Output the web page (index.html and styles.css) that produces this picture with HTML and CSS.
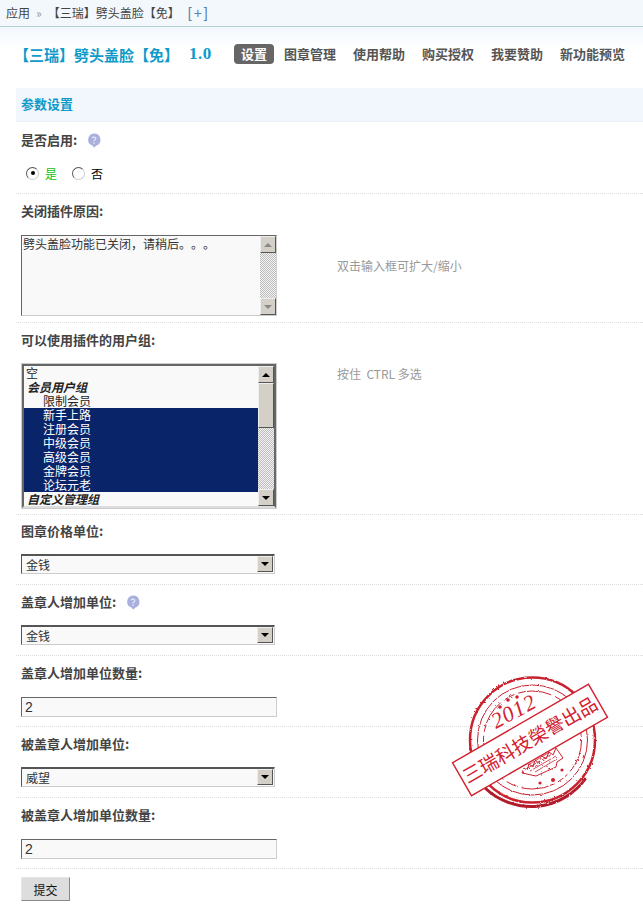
FILE: index.html
```html
<!DOCTYPE html>
<html lang="zh-CN">
<head>
    <meta charset="UTF-8">
    <meta name="viewport" content="width=device-width, initial-scale=1.0">
    <title>【三瑞】劈头盖脸【免】</title>
    <link rel="stylesheet" href="styles.css">
</head>
<body>
    <div class="crumbs">
        <span>应用</span>
        <span class="crumb-sep">»</span>
        <span>【三瑞】劈头盖脸【免】</span>
        <a class="crumb-add" href="#">[+]</a>
    </div>

    <div class="head">
        <h1 class="title">【三瑞】劈头盖脸【免】<span class="version">1.0</span></h1>
        <nav class="tabs">
            <a class="tab active" href="#">设置</a>
            <a class="tab" href="#">图章管理</a>
            <a class="tab" href="#">使用帮助</a>
            <a class="tab" href="#">购买授权</a>
            <a class="tab" href="#">我要赞助</a>
            <a class="tab" href="#">新功能预览</a>
        </nav>
    </div>

    <form class="panel" onsubmit="return false">
        <h2 class="panel-title">参数设置</h2>

        <div class="row row-first">
            <div class="label">是否启用:
                <svg class="help" viewBox="0 0 14 15"><path d="M7 0.5a6.5 6.3 0 0 1 2.2 12.2L7 14.8l-1.2-2A6.5 6.3 0 0 1 7 0.5z" fill="#a9b0de"/><path d="M5.2 5.2C5.4 3.6 8.8 3.6 8.8 5.4C8.8 6.8 7 6.8 7 8.4M7 9.6v1.4" fill="none" stroke="#e4e6f6" stroke-width="1.3"/></svg>
            </div>
            <div class="radios">
                <span class="radio checked"></span><span class="yes">是</span>
                <span class="radio"></span><span class="no">否</span>
            </div>
        </div>

        <div class="row row-area">
            <div class="label label-wide">关闭插件原因:</div>
            <div class="field">
                <div class="area">
                    <textarea class="area-text">劈头盖脸功能已关闭，请稍后。。。</textarea>
                    <div class="scrollbar">
                        <span class="sb-btn off up"></span>
                        <span class="sb-track"></span>
                        <span class="sb-btn off down"></span>
                    </div>
                </div>
                <div class="hint hint-area">双击输入框可扩大/缩小</div>
            </div>
        </div>

        <div class="row row-list">
            <div class="label">可以使用插件的用户组:</div>
            <div class="field">
                <div class="list">
                    <div class="list-items">
                        <div class="item">空</div>
                        <div class="item group">会员用户组</div>
                        <div class="item sub">限制会员</div>
                        <div class="item sub selected">新手上路</div>
                        <div class="item sub selected">注册会员</div>
                        <div class="item sub selected">中级会员</div>
                        <div class="item sub selected">高级会员</div>
                        <div class="item sub selected">金牌会员</div>
                        <div class="item sub selected">论坛元老</div>
                        <div class="item group">自定义管理组</div>
                    </div>
                    <div class="scrollbar">
                        <span class="sb-btn up"></span>
                        <span class="sb-thumb"></span>
                        <span class="sb-track"></span>
                        <span class="sb-btn down"></span>
                    </div>
                </div>
                <div class="hint">按住&nbsp;&nbsp;CTRL 多选</div>
            </div>
        </div>

        <div class="row">
            <div class="label label-tight">图章价格单位:</div>
            <div class="pick"><select class="pick-box"><option>金钱</option></select><span class="sb-btn down"></span></div>
        </div>

        <div class="row">
            <div class="label">盖章人增加单位:
                <svg class="help" viewBox="0 0 14 15"><path d="M7 0.5a6.5 6.3 0 0 1 2.2 12.2L7 14.8l-1.2-2A6.5 6.3 0 0 1 7 0.5z" fill="#a9b0de"/><path d="M5.2 5.2C5.4 3.6 8.8 3.6 8.8 5.4C8.8 6.8 7 6.8 7 8.4M7 9.6v1.4" fill="none" stroke="#e4e6f6" stroke-width="1.3"/></svg>
            </div>
            <div class="pick"><select class="pick-box"><option>金钱</option></select><span class="sb-btn down"></span></div>
        </div>

        <div class="row row-input">
            <div class="label label-wide">盖章人增加单位数量:</div>
            <input class="text-input" type="text" value="2">
        </div>

        <div class="row">
            <div class="label">被盖章人增加单位:</div>
            <div class="pick"><select class="pick-box"><option>威望</option></select><span class="sb-btn down"></span></div>
        </div>

        <div class="row row-input">
            <div class="label label-wide">被盖章人增加单位数量:</div>
            <input class="text-input" type="text" value="2">
        </div>

        <button class="submit" type="submit">提交</button>

        <!-- stamp lies over the rows -->
        <svg class="stamp" viewBox="0 0 180 150">
            <defs>
                <filter id="rough" x="-5%" y="-5%" width="110%" height="110%">
                    <feTurbulence type="fractalNoise" baseFrequency="0.35" numOctaves="2" seed="4"/>
                    <feDisplacementMap in="SourceGraphic" scale="2.5"/>
                </filter>
            </defs>
            <g fill="none" stroke="#c9202e" filter="url(#rough)">
                <circle cx="92.5" cy="75" r="62.5" stroke-width="2.5"/>
                <path d="M45 123A67 67 0 0 0 146 113" stroke="#b01c2a" stroke-width="3"/>
                <circle cx="92.5" cy="75" r="55" stroke-width="1"/>
                <circle cx="92.5" cy="75" r="49" stroke-width="1" stroke-dasharray="34 4 12 4"/>
                <path d="M82 108l2-5 3 2 2-6 4 3 2-7 4 3 3-7 4 3 3-7 4 3 3-7 7 10-6 4-1 5-20 9z" fill="#fff" stroke-width="1"/>
                <path d="M86 104l26-15M90 106l26-15M95 107l22-13M88 100l22-13" stroke-width="0.8"/>
            </g>
            <g fill="#d3202f">
                <circle cx="60" cy="42" r="1.8"/>
                <circle cx="68" cy="35" r="1.8"/>
                <circle cx="77" cy="32" r="1.8"/>
                <circle cx="100" cy="118" r="1.6"/>
                <circle cx="113" cy="115" r="2"/>
                <circle cx="122" cy="105" r="1.6"/>
            </g>
            <text class="stamp-year" x="56" y="64" transform="rotate(-28 56 64)">2012</text>
            <g transform="rotate(-30 90 75)">
                <rect x="11.5" y="56" width="157" height="38" fill="#fff" stroke="#d3202f" stroke-width="1.4"/>
                <text class="stamp-text" x="90" y="82">三瑞科技榮譽出品</text>
            </g>
        </svg>
    </form>
</body>
</html>
```

FILE: styles.css
```css
html, body {
    margin: 0;
    padding: 0;
}
body {
    background-color: #fff;
    color: #444;
    font-family: "Noto Sans CJK SC", "Liberation Sans", sans-serif;
    font-size: 12px;
    overflow: hidden;
}

/* breadcrumb */
.crumbs {
    display: flex;
    align-items: center;
    gap: 6px;
    height: 26px;
    padding-left: 6px;
    background-color: #f2f8fc;
    border-bottom: 1px solid #b8cdd6;
    color: #444;
    line-height: 22px;
}
.crumb-sep {
    color: #999;
}
.crumb-add {
    margin-left: 2px;
    color: #5a7fb0;
    font-family: "Liberation Sans", sans-serif;
    font-size: 14px;
    letter-spacing: 2px;
    text-decoration: none;
}

/* title + tabs */
.head {
    display: flex;
    align-items: center;
    height: 61px;
    padding: 0 0 7px 14px;
    box-sizing: border-box;
    background: linear-gradient(#f1f8fd, #fff 22px);
}
.title {
    display: flex;
    align-items: center;
    gap: 10px;
    width: 220px;
    margin: 0;
    color: #0f9ac9;
    font-size: 15px;
    font-weight: bold;
}
.version {
    font-family: "Liberation Serif", serif;
    font-size: 17px;
    letter-spacing: 0.5px;
}
.tabs {
    display: flex;
    gap: 3px;
}
.tab {
    padding: 0 7px;
    border-radius: 4px;
    color: #555;
    font-size: 13px;
    font-weight: bold;
    line-height: 20px;
    text-decoration: none;
}
.tab.active {
    background-color: #666;
    color: #fff;
}

/* form */
.panel {
    position: relative;
    margin-left: 16px;
}
.panel-title {
    height: 34px;
    margin: 0;
    padding-left: 5px;
    background-color: #f1f7fd;
    border-bottom: 1px solid #eef3f7;
    box-sizing: border-box;
    color: #0f9ac9;
    font-size: 13px;
    font-weight: bold;
    line-height: 31px;
}
.row {
    padding: 8px 0 10px 5px;
    border-bottom: 1px dotted #ddd;
}
.row-first {
    padding-top: 9px;
}
.row-first .label {
    margin-bottom: 14px;
}
.row-area {
    padding-bottom: 6px;
}
.row-list {
    padding-bottom: 5px;
}
.row-input {
    padding-bottom: 9px;
}
.label {
    display: flex;
    align-items: center;
    gap: 3px;
    height: 18px;
    margin-bottom: 14px;
    color: #444;
    font-size: 13px;
    font-weight: bold;
    line-height: 18px;
}
.label-wide {
    margin-bottom: 15px;
}
.label-tight {
    margin-top: -1px;
    margin-bottom: 14px;
}
.help {
    width: 14px;
    height: 15px;
    margin-left: 7px;
}

/* radios */
.radios {
    display: flex;
    align-items: center;
    height: 20px;
    padding-left: 5px;
    color: #000;
}
.radio {
    position: relative;
    width: 11px;
    height: 11px;
    border-radius: 50%;
    border: 1px solid;
    border-color: #555 #ccc #ccc #555;
    background-color: #fff;
}
.radio.checked::after {
    content: "";
    position: absolute;
    left: 3.5px;
    top: 3.5px;
    width: 4px;
    height: 4px;
    border-radius: 50%;
    background-color: #000;
}
.yes {
    width: 27px;
    margin-left: 6px;
    color: #12c012;
}
.no {
    margin-left: 6px;
}

/* textarea + listbox */
.field {
    display: flex;
}
.hint {
    margin: 3px 0 0 60px;
    color: #999;
    line-height: 16px;
}
.hint-area {
    margin-top: 23px;
}
.area {
    display: flex;
    width: 254px;
    height: 79px;
    background-color: #f9f9f9;
    border: 1px solid;
    border-color: #666 #ccc #ccc #666;
}
.area-text {
    flex: 1;
    min-width: 0;
    padding: 1px 0 0 1px;
    background: transparent;
    border: none;
    outline: none;
    resize: none;
    overflow: hidden;
    color: #333;
    font-family: "Noto Sans CJK TC", sans-serif;
    font-size: 12px;
    line-height: 14px;
    text-spacing-trim: space-all;
}
.list {
    display: flex;
    width: 250px;
    height: 140px;
    background-color: #f9f9f9;
    border: 3px solid;
    border-color: #666 #666 #ddd #666;
    outline: 1px solid #ccc;
    outline-offset: -1px;
}
.list-items {
    flex: 1;
    min-width: 0;
    color: #222;
}
.item {
    height: 14px;
    padding-left: 2px;
    font-family: "Liberation Sans", "Noto Sans CJK SC", sans-serif;
    line-height: 16px;
    white-space: nowrap;
}
.item.group {
    padding-left: 3px;
    color: #222;
    font-style: italic;
    font-weight: bold;
}
.item.sub {
    padding-left: 19px;
}
.item.selected {
    background-color: #0a246a;
    color: #fff;
}

/* old style scrollbar */
.scrollbar {
    display: flex;
    flex-direction: column;
    width: 16px;
}
.sb-track {
    flex: 1;
    background-color: #eee;
    background-image: repeating-conic-gradient(#bbb 0 25%, #f4f4f4 0 50%);
    background-size: 2px 2px;
}
.sb-thumb {
    height: 45px;
    box-sizing: border-box;
    background-color: #d4d0c8;
    border: 1px solid;
    border-color: #eee #555 #555 #eee;
}
.sb-btn {
    display: flex;
    align-items: center;
    justify-content: center;
    flex-shrink: 0;
    width: 16px;
    height: 17px;
    box-sizing: border-box;
    background-color: #d4d0c8;
    border: 1px solid;
    border-color: #eee #555 #555 #eee;
}
.sb-btn::after {
    content: "";
    border-left: 4px solid transparent;
    border-right: 4px solid transparent;
}
.sb-btn.up::after {
    border-bottom: 4px solid #000;
}
.sb-btn.down::after {
    border-top: 4px solid #000;
}
.sb-btn.off::after {
    border-top-color: #888;
    border-bottom-color: #888;
}

/* select */
.pick {
    display: flex;
    align-items: center;
    width: 248px;
    height: 16px;
    padding: 1px 1px 1px 3px;
    background-color: #f9f9f9;
    border-top: 1px solid #555;
    border-left: 1px solid #555;
    border-right: 1px solid #ccc;
    border-bottom: 1px solid #ccc;
    box-shadow: inset 0 1px 0 #555;
}
.pick-box {
    flex: 1;
    min-width: 0;
    height: 16px;
    padding: 0 0 0 1px;
    appearance: none;
    background: transparent;
    border: none;
    outline: none;
    color: #333;
    font-family: inherit;
    font-size: 12px;
}
.pick .sb-btn {
    height: 16px;
}

.text-input {
    display: block;
    width: 251px;
    height: 18px;
    padding: 0 0 0 3px;
    background-color: #f9f9f9;
    border: 1px solid;
    border-color: #666 #ccc #ccc #666;
    outline: none;
    color: #333;
    font-family: "Liberation Sans", sans-serif;
    font-size: 14px;
}

.submit {
    display: block;
    width: 49px;
    height: 24px;
    margin: 8px 0 0 5px;
    padding: 0;
    background-color: #ddd;
    border: 1px solid;
    border-color: #e6e6e6 #888 #888 #e6e6e6;
    color: #111;
    font-family: inherit;
    font-size: 12px;
}

/* stamp */
.stamp {
    position: absolute;
    left: 424px;
    top: 577px;
    width: 180px;
    height: 150px;
    pointer-events: none;
}
.stamp-year {
    fill: #d3202f;
    font-family: "Liberation Serif", serif;
    font-size: 22px;
    font-style: italic;
    letter-spacing: 1px;
}
.stamp-text {
    fill: #d3202f;
    font-family: "Noto Sans CJK TC", sans-serif;
    font-size: 19px;
    text-anchor: middle;
}
```
